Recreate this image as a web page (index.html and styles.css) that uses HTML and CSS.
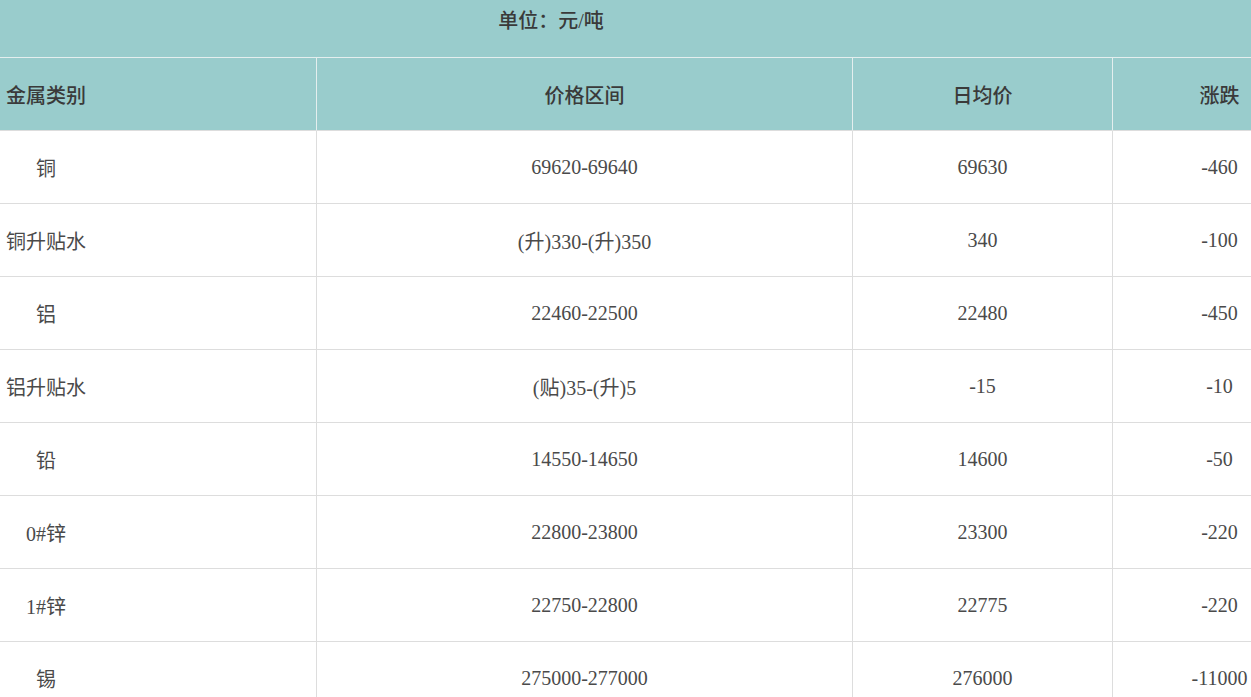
FILE: index.html
```html
<!DOCTYPE html>
<html lang="zh-CN">
<head>
<meta charset="utf-8">
<title>金属价格</title>
<link rel="stylesheet" href="styles.css">
</head>
<body>
<div class="viewport">
  <table class="price-table">
    <colgroup>
      <col class="c-type">
      <col class="c-range">
      <col class="c-avg">
      <col class="c-change">
    </colgroup>
    <thead>
      <tr class="unit-row"><th colspan="4">单位：元/吨</th></tr>
      <tr class="head-row">
        <th>金属类别</th>
        <th>价格区间</th>
        <th>日均价</th>
        <th>涨跌</th>
      </tr>
    </thead>
    <tbody>
      <tr><td>铜</td><td>69620-69640</td><td>69630</td><td>-460</td></tr>
      <tr><td>铜升贴水</td><td>(升)330-(升)350</td><td>340</td><td>-100</td></tr>
      <tr><td>铝</td><td>22460-22500</td><td>22480</td><td>-450</td></tr>
      <tr><td>铝升贴水</td><td>(贴)35-(升)5</td><td>-15</td><td>-10</td></tr>
      <tr><td>铅</td><td>14550-14650</td><td>14600</td><td>-50</td></tr>
      <tr><td>0#锌</td><td>22800-23800</td><td>23300</td><td>-220</td></tr>
      <tr><td>1#锌</td><td>22750-22800</td><td>22775</td><td>-220</td></tr>
      <tr><td>锡</td><td>275000-277000</td><td>276000</td><td>-11000</td></tr>
    </tbody>
  </table>
</div>
</body>
</html>
```

FILE: styles.css
```css
html, body {
  margin: 0;
  padding: 0;
  background: #ffffff;
  overflow: hidden;
}

.viewport {
  width: 1251px;
  height: 697px;
  overflow: hidden;
}

.price-table {
  width: 1550px;
  margin-left: -224px;
  table-layout: fixed;
  border-collapse: separate;
  border-spacing: 0;
  font-family: "Liberation Serif", "Noto Sans CJK SC", serif;
  font-size: 20px;
  color: #4a4a4a;
}

.c-type { width: 540px; }
.c-range { width: 536px; }
.c-avg { width: 260px; }
.c-change { width: 214px; }

.price-table th,
.price-table td {
  padding: 0;
  text-align: center;
  vertical-align: middle;
  font-weight: normal;
}

.price-table th + th,
.price-table td + td {
  border-left: 1px solid #dddddd;
}

.unit-row th {
  height: 58px;
  background: #99cccc;
  color: #3a3a3a;
  border-bottom: 1px solid #e4eeee;
  vertical-align: top;
  padding-top: 8px;
  line-height: 26px;
  box-sizing: border-box;
  font-weight: 500;
}

.head-row th {
  height: 72px;
  background: #99cccc;
  color: #3a3a3a;
  border-bottom: 1px solid #dddddd;
  font-weight: 500;
}

.head-row th + th {
  border-left: 1px solid #e4eeee;
}

.price-table td {
  height: 72px;
  border-bottom: 1px solid #dddddd;
}
```
